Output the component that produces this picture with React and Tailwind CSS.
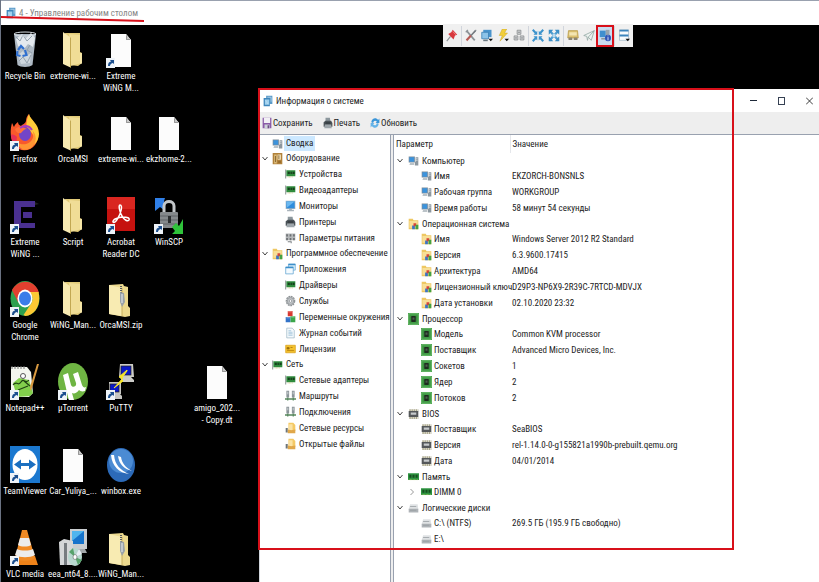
import clsx from "clsx";

// ---------- desktop icons ----------

const Shortcut = () => (
  <g>
    <rect x="0" y="27" width="9" height="10" fill="#eef3f8" />
    <path d="M2 35c0-3 1-4 3-4.500l-1-1.500h4v4l-1.200-1c-2 .6-2.600 1.500-2.800 3z" fill="#1c4f8f" />
  </g>
);

const Svg = ({ children, shortcut }) => (
  <svg viewBox="0 0 30 37" className="h-[37px] w-[30px] shrink-0" aria-hidden="true">
    {children}
    {shortcut && <Shortcut />}
  </svg>
);

const RecycleIcon = () => (
  <Svg>
    <path d="M4 3l22 0-3.500 31c-3 2.500-12 2.500-15 0z" fill="#aeb9c4" />
    <path d="M6 8l6-5 4 4 5-5 4 5-2 9-5-3-4 5-6-3z" fill="#e4e9ee" />
    <path d="M8 24l5-4 3 5 5-3-1 10-9 1z" fill="#cfd7de" />
    <path d="M6 6l4 4 3-6 4 6 5-5M9 30l4-4 4 6 4-8M20 14l-3 5 5 3" stroke="#93a1ad" fill="none" />
    <ellipse cx="15" cy="3" rx="11" ry="2" fill="none" stroke="#d7dde2" />
    <path d="M8 19l3-4 3 3M15 19l1.500 5-4 1M10.500 25l-3.500-1 .5-4" stroke="#2f6fd0" strokeWidth="2.200" fill="none" />
  </Svg>
);

const FolderIcon = () => (
  <Svg>
    <path d="M7 2h15l0 19 2 1v10l-4 3-8-1z" fill="#e2cb79" />
    <path d="M11 3l11 1v18l1.500 1v9l-11 3z" fill="#f0dd96" />
    <path d="M5 1l7.500 5.500v30L5 33z" fill="#f8eab2" />
    <path d="M12.500 6.500v30" stroke="#c2a853" />
    <path d="M23 22v11" stroke="#fff3bf" />
  </Svg>
);

const ZipIcon = () => (
  <Svg>
    <path d="M3 5l14-1 1 2 4 1v19l2 2v8l-5 1L3 34z" fill="#ecd98e" />
    <path d="M3 5l13 3v28L3 34z" fill="#f8ebb2" />
    <path d="M16 8v28" stroke="#c7ae5c" />
    <path d="M15 6v15" stroke="#55595e" strokeWidth="2" strokeDasharray="1 1" />
    <path d="M14 12l4 1 1 9-3 5-2-5z" fill="#9aa2a8" />
    <path d="M16 14v9" stroke="#eef1f3" />
  </Svg>
);

const FileIcon = ({ shortcut }) => (
  <Svg shortcut={shortcut}>
    <path d="M5 3h15l5 6v27H5z" fill="#fcfcfc" />
    <path d="M20 3v6h5z" fill="#c9c9c9" />
    <path d="M20.500 4.500v4h3.500" fill="none" stroke="#777" strokeWidth=".6" />
  </Svg>
);

const FirefoxIcon = () => (
  <Svg shortcut>
    <path d="M2 9c1 1 1 3 2 4 1-3 3-4 4-5 0 2 1 3 3 4 2-2 4-2 5-5 0-3 1-5 3-7 1 5 5 7 7 12 3 7 3 14-1 19-5 7-16 7-21 0C0 25 0 16 2 9z" fill="#f9592b" />
    <path d="M19 0c1 6 10 9 10 20 0 4-2 8-5 11 2-8-2-13-6-16-3-3-1-11 1-15z" fill="#ffcb3a" />
    <path d="M3 23c3 8 12 9 17 5 4-3 4-9 2-12 6 6 4 14-1 18-6 4-15 2-18-11z" fill="#ff9433" />
    <path d="M1 21c1 9 5 13 11 14-5-3-6-8-5-12-2-2-4-3-6-2z" fill="#e62f57" />
    <ellipse cx="15" cy="20" rx="6" ry="7" fill="#7245c8" />
    <path d="M5 15c5-4 8-2 12 0-3 0-4 2-6 4-3 1-5-1-6-4z" fill="#ff7139" />
    <path d="M10 14c4-3 9-3 12 2" stroke="#a63bc0" strokeWidth="2" fill="none" />
  </Svg>
);

const ExtremeIcon = () => (
  <Svg shortcut>
    <path d="M4 4h21v6H11v16h14v5H4z" fill="#4a3090" />
    <rect x="13" y="15" width="9" height="6" fill="#4a3090" />
    <path d="M25 5l4 2-4 1" fill="#222" />
  </Svg>
);

const AcrobatIcon = () => (
  <Svg shortcut>
    <rect x="1" y="0" width="28" height="34" fill="#c5120f" />
    <rect x="1" y="0" width="28" height="12" fill="#d92620" />
    <path d="M14 8c3 0 1 8-2 13-2 4-4 5-5 4-1-2 5-5 10-5 4 0 7 1 6 3s-5 0-7-4c-2-3-4-11-2-11z" fill="none" stroke="#fff" strokeWidth="1.500" />
  </Svg>
);

const WinscpIcon = () => (
  <Svg shortcut>
    <path d="M1 1h10l-1 3v9l-4-3-5 4z" fill="#2f7fe8" />
    <path d="M10 16V9c0-6 10-6 10 0v7" fill="none" stroke="#c3c7ca" strokeWidth="3" />
    <rect x="6" y="15" width="18" height="16" rx="1" fill="#85898c" />
    <path d="M6 19h18M6 23h18M6 27h18" stroke="#5f6366" />
    <rect x="14" y="19" width="3" height="7" fill="#2c2f31" />
    <path d="M29 22v15H18l3-3-3-4 4-4 3 3z" fill="#2fc33a" />
  </Svg>
);

const ChromeIcon = () => (
  <Svg shortcut>
    <ellipse cx="15" cy="18.500" rx="14.500" ry="17.500" fill="#2da04f" />
    <path d="M2 10C8-1 23-1 28 10l1 3H15l-7 9z" fill="#e2402f" />
    <path d="M28.500 12c3 12-3 23-13 24l-2-1 8-12c2-4 1-8-2-11z" fill="#fcc934" />
    <ellipse cx="15" cy="18.500" rx="7.500" ry="9" fill="#fff" />
    <ellipse cx="15" cy="18.500" rx="6" ry="7" fill="#3b7de9" />
  </Svg>
);

const NotepadIcon = () => (
  <Svg shortcut>
    <path d="M1 4h16l4 5 2 21-4 4H1z" fill="#f3f5ee" />
    <path d="M2 3v3M5 3v3M8 3v3M11 3v3M14 3v3" stroke="#777" />
    <path d="M3 20l6-5 10 2 4 13-3 3-13 1z" fill="#82cf4c" />
    <path d="M3 22c4-5 5 2 8-3s4 3 8-2M8 27l10-4M14 18l6 5" stroke="#1f4213" fill="none" strokeWidth="1.200" />
    <circle cx="13" cy="13" r="2.500" fill="#fff" stroke="#555" />
    <path d="M29 1L22 25l-2 3v-4L27 1z" fill="#d99a41" />
  </Svg>
);

const UtorrentIcon = () => (
  <Svg shortcut>
    <ellipse cx="15" cy="18.500" rx="15" ry="18.500" fill="#6fb543" />
    <path d="M5 12l5-2 3 12c1 3 6 2 5-2L15 11l5-2 4 13c1 2 2 3 4 2l-1 4c-3 1-5 0-6-1-2 3-5 4-7 3l2 7-5 1z" fill="#fff" />
  </Svg>
);

const PuttyIcon = () => (
  <Svg shortcut>
    <path d="M14 1h13l1 13h-3l3 3v2H15v-3l-2-2z" fill="#cdcdc9" />
    <rect x="15" y="3" width="10" height="9" fill="#0a18c8" stroke="#222" strokeWidth=".7" />
    <path d="M3 19h12v12h-1l2 2v3H4v-4H3z" fill="#c6c6c2" />
    <rect x="4" y="21" width="9" height="8" fill="#0a18c8" stroke="#222" strokeWidth=".7" />
    <path d="M21 7l-8 7 4 1-9 10 9-7-2-2 6-8z" fill="#f6e52a" stroke="#f6e52a" />
  </Svg>
);

const TeamviewerIcon = () => (
  <Svg shortcut>
    <rect width="30" height="37" fill="#1b78cf" />
    <ellipse cx="15" cy="18.500" rx="12.500" ry="15.500" fill="#fff" />
    <path d="M4 18.500l7-5v3.500h8v-3.500l7 5-7 5V20h-8v3.500z" fill="#1b6fc0" />
  </Svg>
);

const WinboxIcon = () => (
  <Svg>
    <ellipse cx="15" cy="19" rx="14" ry="17" fill="#2c6ab8" />
    <ellipse cx="15" cy="15" rx="12" ry="12" fill="#4b8bd3" />
    <path d="M5 9c1 11 8 18 18 19-9-4-14-9-15-19zM12 10c1 8 6 13 14 15-7-4-10-8-11-14z" fill="#fff" />
  </Svg>
);

const VlcIcon = () => (
  <Svg shortcut>
    <path d="M5 27h20l3 9H2z" fill="#ee8219" />
    <path d="M12 1h5l8 28c-4 4-16 4-20 0z" fill="#f08a24" />
    <path d="M10 9h9l2 7c-3 2-10 2-13 0zM7 20c4 2 12 2 16 0l2 6c-5 3-15 3-20 0z" fill="#ececec" />
  </Svg>
);

const InstallerIcon = () => (
  <Svg>
    <path d="M12 0h17v20H12z" fill="#c9cdd0" />
    <rect x="14" y="2" width="12" height="13" fill="#1673cb" />
    <path d="M14 2h12l-12 10z" fill="#4fb5ee" />
    <path d="M15 20h12l2 4H13z" fill="#a3a8ab" />
    <path d="M1 13l5-3 9 2v24H2z" fill="#d5d7d8" />
    <path d="M6 14h3v22H6z" fill="#777c80" />
    <ellipse cx="17" cy="28" rx="7" ry="9" fill="#b8d8cf" />
    <path d="M17 28l-6-5 4-4zM17 28l7 3-4 5z" fill="#58a36c" />
    <path d="M17 28l4-8 3 5z" fill="#e9eef5" />
    <ellipse cx="17" cy="28" rx="2" ry="2.500" fill="#fff" stroke="#666" strokeWidth=".6" />
  </Svg>
);

const desktopItems = [
  { label: "Recycle Bin", icon: <RecycleIcon />, place: "col-start-1 row-start-1" },
  { label: "extreme-wi...", icon: <FolderIcon />, place: "col-start-2 row-start-1" },
  { label: "Extreme\nWiNG M...", icon: <FileIcon shortcut />, place: "col-start-3 row-start-1" },
  { label: "Firefox", icon: <FirefoxIcon />, place: "col-start-1 row-start-2" },
  { label: "OrcaMSI", icon: <FolderIcon />, place: "col-start-2 row-start-2" },
  { label: "extreme-wi...", icon: <FileIcon />, place: "col-start-3 row-start-2" },
  { label: "ekzhome-2...", icon: <FileIcon />, place: "col-start-4 row-start-2" },
  { label: "Extreme\nWiNG ...", icon: <ExtremeIcon />, place: "col-start-1 row-start-3" },
  { label: "Script", icon: <FolderIcon />, place: "col-start-2 row-start-3" },
  { label: "Acrobat\nReader DC", icon: <AcrobatIcon />, place: "col-start-3 row-start-3" },
  { label: "WinSCP", icon: <WinscpIcon />, place: "col-start-4 row-start-3" },
  { label: "Google\nChrome", icon: <ChromeIcon />, place: "col-start-1 row-start-4" },
  { label: "WiNG_Man...", icon: <FolderIcon />, place: "col-start-2 row-start-4" },
  { label: "OrcaMSI.zip", icon: <ZipIcon />, place: "col-start-3 row-start-4" },
  { label: "Notepad++", icon: <NotepadIcon />, place: "col-start-1 row-start-5" },
  { label: "µTorrent", icon: <UtorrentIcon />, place: "col-start-2 row-start-5" },
  { label: "PuTTY", icon: <PuttyIcon />, place: "col-start-3 row-start-5" },
  { label: "amigo_202...\n- Copy.dt", icon: <FileIcon />, place: "col-start-5 row-start-5" },
  { label: "TeamViewer", icon: <TeamviewerIcon />, place: "col-start-1 row-start-6" },
  { label: "Car_Yuliya_...", icon: <FileIcon />, place: "col-start-2 row-start-6" },
  { label: "winbox.exe", icon: <WinboxIcon />, place: "col-start-3 row-start-6" },
  { label: "VLC media", icon: <VlcIcon />, place: "col-start-1 row-start-7" },
  { label: "eea_nt64_8....", icon: <InstallerIcon />, place: "col-start-2 row-start-7" },
  { label: "WiNG_Man...", icon: <ZipIcon />, place: "col-start-3 row-start-7" },
];

// ---------- small icons, 16x16 grid ----------

const glyphs = {
  app: (
    <>
      <path d="M5 1h10v11H5z" fill="#5b9bc9" />
      <path d="M1 4h10v11H1z" fill="#3f86bb" />
      <path d="M3 6h7v7H3z" fill="#9fd0ee" />
      <path d="M4 7l4 5M7 3h6v6" stroke="#c3e0f2" fill="none" />
    </>
  ),
  computer: (
    <>
      <path d="M1 2h9v8H1z" fill="#7d8c98" />
      <path d="M2 3h7v6H2z" fill="#3c93dc" />
      <path d="M3 11h6v2H2z" fill="#a5afb6" />
      <path d="M11 3h4v11h-5V9h1z" fill="#8c979f" />
      <path d="M11 5h3M11 7h3" stroke="#e2e7ea" />
    </>
  ),
  hardware: (
    <>
      <path d="M1 0h14v15H1z" fill="#b1813a" />
      <path d="M3 2h4v12H3z" fill="#d9b877" />
      <path d="M8 2h5v7H8z" fill="#f0dfb6" />
      <path d="M10 3v5M5 4v8M9 12h4" stroke="#6b4a18" />
    </>
  ),
  card: (
    <>
      <path d="M1 2v12" stroke="#8d9694" strokeWidth="1.500" />
      <path d="M2 3h13v8H2z" fill="#2f8b3d" />
      <path d="M4 5h3v3H4zM8 5h2v3H8zM11 5h3v3h-3z" fill="#173f1d" />
      <path d="M4 12h8" stroke="#c3b14c" strokeDasharray="1 1" />
    </>
  ),
  monitor: (
    <>
      <path d="M1 1h14v11H1z" fill="#9fb3c2" />
      <path d="M2 2h12v9H2z" fill="#2f8ddd" />
      <path d="M2 2h12L3 10z" fill="#6bb8f0" />
      <path d="M6 12h4v1h3v2H3v-2h3z" fill="#a9b3ba" />
    </>
  ),
  printer: (
    <>
      <path d="M4 1h7l1 6H4z" fill="#8c979d" />
      <path d="M1 7l3-2h9l2 3v5H1z" fill="#4a5257" />
      <path d="M3 10h10l1 5H2z" fill="#9da5aa" />
      <path d="M4 8h8" stroke="#1e2326" />
    </>
  ),
  power: (
    <>
      <path d="M1 2h14v9H1z" fill="#b5b8ba" />
      <path d="M3 3v3M8 3v3M13 3v3M3 8v3M8 8v3M13 8v3" stroke="#6b6f72" strokeWidth="2.400" />
      <path d="M4 13h5v2" stroke="#7c8184" fill="none" strokeWidth="1.500" />
    </>
  ),
  software: (
    <>
      <path d="M1 1h6l1 2h7v12H1z" fill="#eec863" />
      <path d="M2 4h12v9H2z" fill="#f8df97" />
      <path d="M6 10h4v5H6z" fill="#3b74c5" />
      <path d="M8 7h4v4H8z" fill="#d9433a" />
      <path d="M11 9h4v6h-4z" fill="#43a243" />
    </>
  ),
  windows: (
    <>
      <path d="M5 1.500h10v8H5z" fill="#d6edfa" stroke="#6aacd6" />
      <path d="M1 5.500h11v9H1z" fill="#f4fbff" stroke="#5a9fce" />
      <path d="M1 6h11M5 2h10" stroke="#3c8fca" strokeWidth="2" />
    </>
  ),
  gear: (
    <>
      <circle cx="8" cy="8" r="6" fill="#cfd2d4" stroke="#8e9396" strokeWidth="2" strokeDasharray="2.500 1" />
      <circle cx="8" cy="8" r="4.500" fill="#c3c7ca" stroke="#8e9396" />
      <circle cx="8" cy="8" r="1.800" fill="#fff" stroke="#8e9396" />
    </>
  ),
  cubes: (
    <>
      <path d="M4 0h7v7H4z" fill="#d8372f" />
      <path d="M1 8h7v7H1z" fill="#3273c8" />
      <path d="M8 7h7v8H8z" fill="#3aa64a" />
      <path d="M4 1h6M2 9h5M9 8h5" stroke="#ffffff88" />
    </>
  ),
  log: (
    <>
      <path d="M2.500 1.500h8l3 3v10h-11z" fill="#f4f9fc" stroke="#9db6c6" />
      <path d="M5 5h4M5 7h6M5 9h6M5 11h6" stroke="#8fb8d3" />
    </>
  ),
  license: (
    <>
      <path d="M1 3h14v10H1z" fill="#f4c22e" stroke="#d89d17" />
      <path d="M3 6h3v2H3zM8 6h3" fill="#9a6d0b" stroke="#9a6d0b" />
      <path d="M3 10h10" stroke="#c48e12" strokeWidth="1.500" />
    </>
  ),
  route: (
    <>
      <path d="M2 1h4v9H2zM10 1h4v9h-4z" fill="#8b9499" />
      <path d="M3 3h2M3 5h2M11 3h2M11 5h2" stroke="#e3e7e9" />
      <path d="M0 12h16M4 10v4M12 10v4" stroke="#56875c" strokeWidth="1.800" />
    </>
  ),
  share: (
    <>
      <path d="M5 1h7l3 3v8H5z" fill="#f4c964" />
      <path d="M6 3h5v8H6z" fill="#fbe3a4" />
      <path d="M1 8h3v6H1z" fill="#6c757b" />
      <path d="M4 10l5 1 6-1v5H4z" fill="#e0a74a" />
    </>
  ),
  cpu: (
    <>
      <path d="M0 0h16v16H0z" fill="#3f9a44" />
      <path d="M1 1h14v14H1z" fill="none" stroke="#7cc67b" />
      <path d="M5 4h6v8H5z" fill="#1e2c1f" />
      <path d="M4 5.500h8M4 8h8M4 10.500h8" stroke="#1e2c1f" strokeWidth="1" />
      <path d="M6.500 6h3v3h-3z" fill="#4d5a4e" />
    </>
  ),
  bios: (
    <>
      <path d="M2 3h13M2 13h13" stroke="#a39f80" strokeWidth="3" strokeDasharray="2 1" />
      <path d="M1 4h14v8H1z" fill="#55585a" />
      <path d="M4 6h8v3H4z" fill="#c7cacc" />
    </>
  ),
  memory: (
    <>
      <path d="M0 3h16v9H0z" fill="#2d9440" />
      <path d="M2 5h3v4H2zM6.500 5h3v4h-3zM11 5h3v4h-3z" fill="#174d20" />
      <path d="M1 11.500h14" stroke="#c6cf6e" strokeDasharray="1 1" />
    </>
  ),
  disk: (
    <>
      <path d="M3 3h11l1 7H1z" fill="#dfe2e4" />
      <path d="M1 9h14v5H1z" fill="#aeb3b7" />
      <path d="M3 6h9M3 11h9" stroke="#92989c" />
    </>
  ),
  save: (
    <>
      <path d="M1 1h14v14H1z" fill="#8a5ba8" />
      <path d="M3 1h10v7H3z" fill="#f2f0f5" />
      <path d="M4 10h8v5H4z" fill="#cfd3da" />
      <path d="M9 11h2v4H9z" fill="#5c3c74" />
    </>
  ),
  refresh: (
    <>
      <path d="M2 7c1-6 8-7 11-3l2-2v6H9l2-2c-3-2-5-1-6 2z" fill="#3a95d8" />
      <path d="M14 9c-1 6-8 7-11 3l-2 2V8h6l-2 2c3 2 5 1 6-2z" fill="#65b3e8" />
    </>
  ),
  pin: (
    <>
      <path d="M1 15l5-6" stroke="#8a8f93" strokeWidth="1.500" />
      <path d="M9 1l6 6-3 1-2 5L3 6l4-2z" fill="#d8383d" />
      <path d="M9 3l4 4" stroke="#f29a97" />
    </>
  ),
  tools: (
    <>
      <path d="M2 2l11 12" stroke="#8d9397" strokeWidth="2.400" />
      <path d="M1 4l3-3M12 4l3-3" stroke="#8d9397" strokeWidth="1.500" />
      <path d="M14 2L8 8" stroke="#73797e" strokeWidth="2" />
      <path d="M8 8l-6 6" stroke="#b85a54" strokeWidth="2.800" />
    </>
  ),
  sessions: (
    <>
      <path d="M3 1h11v9H3z" fill="#4a94cc" />
      <path d="M1 4h9v8H1z" fill="#8cc3e8" stroke="#3a7fb4" />
      <path d="M3 14h6" stroke="#6a7780" strokeWidth="2" />
      <path d="M10 12h6l-3 3z" fill="#111" />
    </>
  ),
  bolt: (
    <>
      <path d="M7 0h6l-3 5h4L4 15l3-7H3z" fill="#f2cf3a" stroke="#c9a227" strokeWidth=".6" />
      <path d="M10 12h6l-3 3z" fill="#111" />
    </>
  ),
  keys: (
    <>
      <path d="M5.500 1.500h5v5h-5zM1.500 8.500h5v5h-5zM9.500 8.500h5v5h-5z" fill="#d0d2d3" stroke="#85898c" />
      <path d="M7 4h2M3 11h2M11 11h2" stroke="#5e6366" />
    </>
  ),
  shrink: (
    <>
      <path d="M1 1l4 4M15 1l-4 4M1 15l4-4M15 15l-4-4" stroke="#3c93cc" strokeWidth="2.800" />
      <path d="M7 2v5H2zM9 2v5h5zM7 14V9H2zM9 14V9h5z" fill="#3c93cc" />
    </>
  ),
  expand: (
    <>
      <path d="M2 2l12 12M14 2L2 14" stroke="#4b9ccf" strokeWidth="2.800" />
      <path d="M1 1h6L1 7zM15 1H9l6 6zM1 15h6L1 9zM15 15H9l6-6z" fill="#3c8fc6" />
      <path d="M6 6h4v4H6z" fill="#b9daee" />
    </>
  ),
  recorder: (
    <>
      <path d="M2 2h12l1 9H1z" fill="#dcc171" stroke="#b99b45" />
      <path d="M3 4h10v4H3z" fill="#f3e5b2" />
      <path d="M2 12h5M9 12h5" stroke="#8b8471" strokeWidth="3" />
    </>
  ),
  plane: <path d="M1 8l14-6-4 12-4-4-1 4-1-5zM15 2L7 10" fill="#eef3f1" stroke="#91a7a2" />,
  sysinfo: (
    <>
      <path d="M1 2h8v8H1z" fill="#3f8fce" />
      <path d="M9 1h5v10H9z" fill="#98a5ae" />
      <path d="M3 12h6" stroke="#8b969d" strokeWidth="2" />
      <circle cx="12" cy="11" r="4" fill="#2e55b8" />
      <path d="M12 10v4M12 8v1" stroke="#fff" />
    </>
  ),
  menu: (
    <>
      <path d="M2 1h12v13H2z" fill="#f8fbfd" stroke="#a9bccb" />
      <path d="M2 2h12M2 8h12" stroke="#3d84bb" strokeWidth="2.400" />
      <path d="M10 12h6l-3 3z" fill="#111" />
    </>
  ),
};

const Glyph = ({ name, className = "h-3 w-[11px]" }) => (
  <svg
    viewBox="0 0 16 16"
    preserveAspectRatio="none"
    fill="none"
    className={clsx("shrink-0", className)}
    aria-hidden="true"
  >
    {glyphs[name]}
  </svg>
);

const Chevron = ({ closed }) => (
  <svg viewBox="0 0 6 6" className="h-[6px] w-[6px] shrink-0" aria-hidden="true">
    <path
      d={closed ? "M1.500 0l3 3-3 3" : "M.5 1l2.500 3 2.500-3"}
      fill="none"
      stroke={closed ? "#999" : "#444"}
      strokeWidth="1"
    />
  </svg>
);

// ---------- data ----------

const tree = [
  { label: "Сводка", icon: "computer", selected: true },
  {
    label: "Оборудование",
    icon: "hardware",
    items: [
      ["Устройства", "card"],
      ["Видеоадаптеры", "card"],
      ["Мониторы", "monitor"],
      ["Принтеры", "printer"],
      ["Параметры питания", "power"],
    ],
  },
  {
    label: "Программное обеспечение",
    icon: "software",
    items: [
      ["Приложения", "windows"],
      ["Драйверы", "card"],
      ["Службы", "gear"],
      ["Переменные окружения", "cubes"],
      ["Журнал событий", "log"],
      ["Лицензии", "license"],
    ],
  },
  {
    label: "Сеть",
    icon: "card",
    items: [
      ["Сетевые адаптеры", "card"],
      ["Маршруты", "route"],
      ["Подключения", "route"],
      ["Сетевые ресурсы", "share"],
      ["Открытые файлы", "share"],
    ],
  },
];

const summary = [
  {
    label: "Компьютер",
    icon: "computer",
    rows: [
      ["Имя", "EKZORCH-BONSNLS"],
      ["Рабочая группа", "WORKGROUP"],
      ["Время работы", "58 минут 54 секунды"],
    ],
  },
  {
    label: "Операционная система",
    icon: "software",
    rows: [
      ["Имя", "Windows Server 2012 R2 Standard"],
      ["Версия", "6.3.9600.17415"],
      ["Архитектура", "AMD64"],
      ["Лицензионный ключ", "D29P3-NP6X9-2R39C-7RTCD-MDVJX"],
      ["Дата установки", "02.10.2020 23:32"],
    ],
  },
  {
    label: "Процессор",
    icon: "cpu",
    rows: [
      ["Модель", "Common KVM processor"],
      ["Поставщик", "Advanced Micro Devices, Inc."],
      ["Сокетов", "1"],
      ["Ядер", "2"],
      ["Потоков", "2"],
    ],
  },
  {
    label: "BIOS",
    icon: "bios",
    rows: [
      ["Поставщик", "SeaBIOS"],
      ["Версия", "rel-1.14.0-0-g155821a1990b-prebuilt.qemu.org"],
      ["Дата", "04/01/2014"],
    ],
  },
  { label: "Память", icon: "memory", rows: [["DIMM 0", "", true]] },
  {
    label: "Логические диски",
    icon: "disk",
    rows: [
      ["C:\\ (NTFS)", "269.5 ГБ (195.9 ГБ свободно)"],
      ["E:\\", ""],
    ],
  },
];

const remoteTools = [
  ["pin"],
  ["tools", "sessions", "bolt", "keys"],
  ["shrink", "expand"],
  ["recorder", "plane", "sysinfo"],
  ["menu"],
];

// ---------- parts ----------

const Desktop = () => (
  <ul className="grid auto-rows-[83px] grid-cols-[repeat(5,48px)] pt-[6px]">
    {desktopItems.map(({ label, icon, place }) => (
      <li key={place} className={place}>
        <button type="button" className="flex w-full flex-col items-center gap-[2px] text-white">
          {icon}
          <span className="text-center leading-3 whitespace-pre">{label}</span>
        </button>
      </li>
    ))}
  </ul>
);

const RemoteToolbar = () => (
  <div className="absolute left-[442px] top-6 flex h-[23px] items-center divide-x divide-gray-300 bg-[#f0f0f0]">
    {remoteTools.map((group) => (
      <div key={group[0]} className="flex px-px">
        {group.map((name) => (
          <button
            key={name}
            type="button"
            aria-label={name}
            className={clsx(
              "flex h-5 w-4 items-center justify-center",
              name === "sysinfo" && "bg-[#c9dcf0] outline-2 -outline-offset-1 outline-[#d8101a]"
            )}
          >
            <Glyph name={name} className="h-[13px] w-3" />
          </button>
        ))}
      </div>
    ))}
  </div>
);

const TreePane = () => (
  <nav className="w-[131px] shrink-0 border-r border-gray-400 bg-white pt-px">
    <ul>
      {tree.map(({ label, icon, items, selected }) => (
        <li key={label}>
          <button type="button" className="flex h-[15px] items-center pl-[2px]">
            <span className="flex w-[10px] shrink-0">{items && <Chevron />}</span>
            <Glyph name={icon} />
            <span className={clsx("ml-px px-[2px] leading-[15px]", selected && "bg-[#cce8ff]")}>{label}</span>
          </button>
          {items && (
            <ul>
              {items.map(([text, name]) => (
                <li key={text}>
                  <button type="button" className="flex h-4 items-center gap-[3px] pl-[25px]">
                    <Glyph name={name} />
                    {text}
                  </button>
                </li>
              ))}
            </ul>
          )}
        </li>
      ))}
    </ul>
  </nav>
);

const SummaryTable = () => (
  <div className="min-w-0 flex-1 border-l border-gray-400 bg-white">
    <table className="w-full table-fixed border-collapse text-left">
      <thead>
        <tr className="h-[18px]">
          <th className="w-[116px] border-r border-gray-200 p-0 pl-[2px] font-normal">Параметр</th>
          <th className="p-0 pl-[2px] font-normal">Значение</th>
        </tr>
      </thead>
      {summary.map(({ label, icon, rows }) => (
        <tbody key={label}>
          <tr className="h-[15px]">
            <th colSpan={2} className="p-0 font-normal">
              <div className="flex h-[15px] items-center pl-[3px]">
                <Chevron />
                <Glyph name={icon} className="ml-[5px] mr-[3px] h-3 w-[11px]" />
                {label}
              </div>
            </th>
          </tr>
          {rows.map(([name, value, closed]) => (
            <tr key={name} className="h-4">
              <td className="p-0">
                <div className="flex h-4 items-center pl-[15px]">
                  <span className="flex w-3 shrink-0">{closed && <Chevron closed />}</span>
                  <Glyph name={icon} className="mr-[2px] h-3 w-[11px]" />
                  {name}
                </div>
              </td>
              <td className="p-0 pl-[2px]">{value}</td>
            </tr>
          ))}
        </tbody>
      ))}
    </table>
  </div>
);

const InfoWindow = () => (
  <section className="absolute bottom-0 left-[258px] right-0 top-[89px] flex flex-col border-l border-gray-300 bg-[#eeeeee] whitespace-nowrap">
    <header className="flex h-[23px] items-center bg-white pl-[3px]">
      <Glyph name="app" className="h-3 w-[10px]" />
      <h2 className="ml-[3px]">Информация о системе</h2>
      <div className="-mr-1 ml-auto flex">
        <button type="button" aria-label="Свернуть" className="flex h-5 w-7 items-center justify-center">
          <span className="h-px w-[7px] bg-gray-800" />
        </button>
        <button type="button" aria-label="Развернуть" className="flex h-5 w-7 items-center justify-center">
          <span className="h-2 w-[7px] border border-gray-700" />
        </button>
        <button type="button" aria-label="Закрыть" className="flex h-5 w-7 items-center justify-center">
          <svg viewBox="0 0 8 8" className="h-2 w-[7px]" aria-hidden="true">
            <path d="M0 0l8 8M8 0L0 8" stroke="#222" />
          </svg>
        </button>
      </div>
    </header>

    <div className="flex h-[23px] items-center gap-[10px] border-b border-gray-400 pl-[2px]">
      {[
        ["save", "Сохранить"],
        ["printer", "Печать"],
        ["refresh", "Обновить"],
      ].map(([name, text]) => (
        <button key={name} type="button" className="flex items-center gap-px">
          <Glyph name={name} className="h-3 w-[10px]" />
          {text}
        </button>
      ))}
    </div>

    <div className="flex flex-1 gap-[2px]">
      <TreePane />
      <SummaryTable />
    </div>
  </section>
);

const App = () => (
  <main className="relative h-screen overflow-hidden border-l border-gray-500 bg-black font-['Roboto_Condensed','Roboto',sans-serif] text-[9px] leading-3 text-[#222]">
    <header className="flex h-[25px] items-center gap-[3px] border-t border-gray-400 bg-white pl-[5px] text-[#858585]">
      <Glyph name="app" className="h-3 w-[10px]" />
      <h1>4 - Управление рабочим столом</h1>
    </header>

    <Desktop />
    <RemoteToolbar />
    <InfoWindow />

    {/* red marks */}
    <svg viewBox="0 0 144 8" className="absolute -left-px top-[14px] h-2 w-36" aria-hidden="true">
      <path d="M0 3l144 4" stroke="#d8101a" strokeWidth="2" />
    </svg>
    <div className="pointer-events-none absolute left-[257px] top-[88px] h-[462px] w-[476px] border-2 border-[#d8101a]" />
  </main>
);

export default App;
